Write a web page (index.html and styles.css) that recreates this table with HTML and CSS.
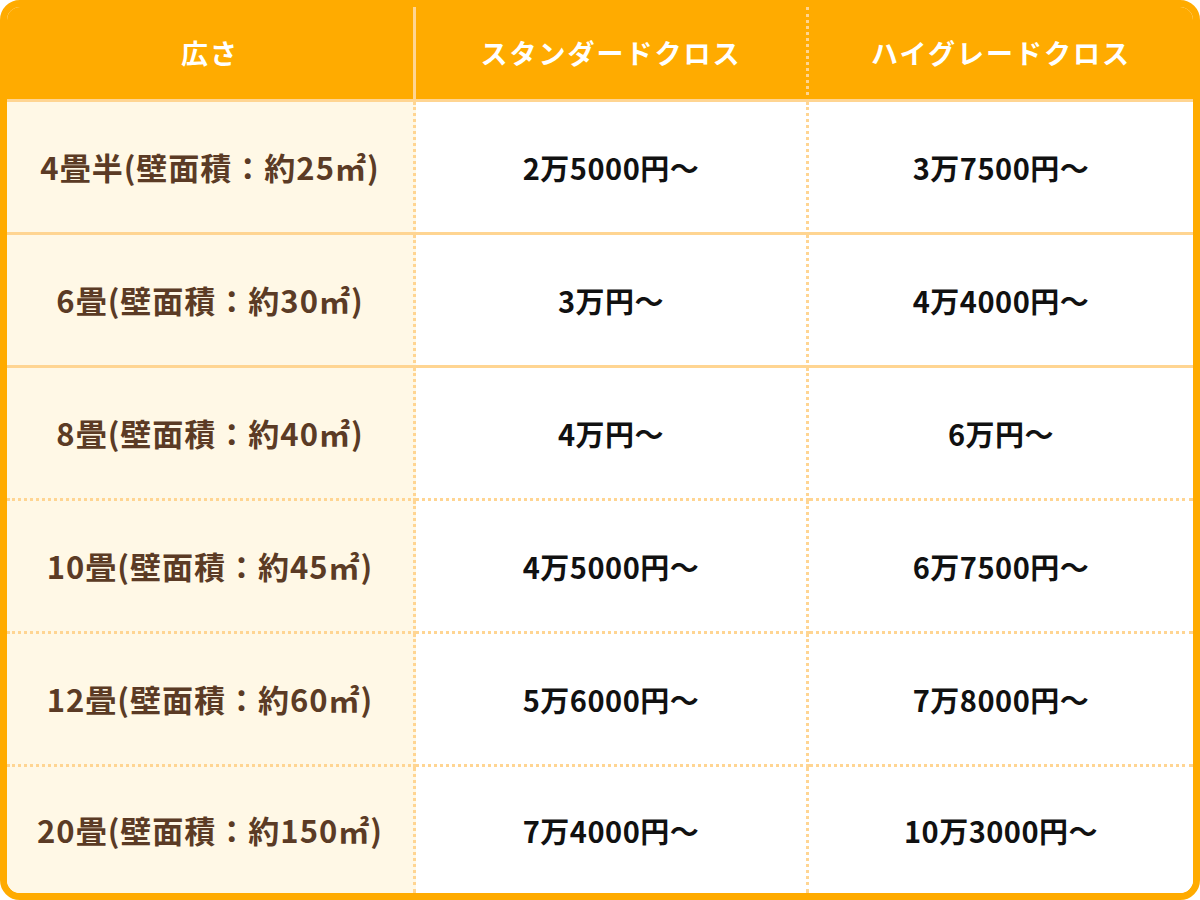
FILE: index.html
```html
<!DOCTYPE html>
<html lang="ja">
<head>
<meta charset="utf-8">
<title>料金表</title>
<link rel="stylesheet" href="styles.css">
</head>
<body>
<div class="wrap">
  <table class="price">
    <thead>
      <tr class="head">
        <th class="c1">広さ</th>
        <th class="c2">スタンダードクロス</th>
        <th class="c3">ハイグレードクロス</th>
      </tr>
    </thead>
    <tbody>
      <tr class="solid">
        <th class="c1">4畳半(壁面積：約25㎡)</th>
        <td class="c2">2万5000円〜</td>
        <td class="c3">3万7500円〜</td>
      </tr>
      <tr class="solid">
        <th class="c1">6畳(壁面積：約30㎡)</th>
        <td class="c2">3万円〜</td>
        <td class="c3">4万4000円〜</td>
      </tr>
      <tr class="dot">
        <th class="c1">8畳(壁面積：約40㎡)</th>
        <td class="c2">4万円〜</td>
        <td class="c3">6万円〜</td>
      </tr>
      <tr class="dot">
        <th class="c1">10畳(壁面積：約45㎡)</th>
        <td class="c2">4万5000円〜</td>
        <td class="c3">6万7500円〜</td>
      </tr>
      <tr class="dot">
        <th class="c1">12畳(壁面積：約60㎡)</th>
        <td class="c2">5万6000円〜</td>
        <td class="c3">7万8000円〜</td>
      </tr>
      <tr class="last">
        <th class="c1">20畳(壁面積：約150㎡)</th>
        <td class="c2">7万4000円〜</td>
        <td class="c3">10万3000円〜</td>
      </tr>
    </tbody>
  </table>
</div>
</body>
</html>
```

FILE: styles.css
```css
html, body {
  margin: 0;
  padding: 0;
  background: #ffffff;
}

body {
  font-family: "Noto Sans CJK JP", "Noto Sans", sans-serif;
}

.wrap {
  width: 1200px;
  height: 900px;
  box-sizing: border-box;
  border: 7px solid #ffab00;
  border-radius: 20px;
  overflow: hidden;
  background: #ffffff;
}

.price {
  width: 1186px;
  height: 886px;
  border-collapse: separate;
  border-spacing: 0;
  table-layout: fixed;
}

.price th,
.price td {
  padding: 0;
  text-align: center;
  vertical-align: middle;
  font-weight: 700;
  line-height: 1.2;
}

.c1 { width: 406px; }
.c2 { width: 390px; }
.c3 { width: 384px; }

/* header */
.head th {
  height: 92px;
  background: #ffab00;
  color: #ffffff;
  font-size: 27px;
  letter-spacing: 2px;
  border-bottom: 3px solid #ffd592;
}
.head .c1 { border-right: 3px solid #ffd592; }
.head .c2 { border-right: 3px dotted #ffd592; }

/* body rows */
tbody th,
tbody td {
  height: 130px;
}
tbody .c1 {
  background: #fff8e6;
  color: #5b3b25;
  font-size: 31px;
  letter-spacing: 1px;
  border-right: 3px dotted #ffd592;
}
tbody .c2,
tbody .c3 {
  background: #ffffff;
  color: #111111;
  font-size: 29px;
  letter-spacing: 0.5px;
}
tbody .c2 { border-right: 3px dotted #ffd592; }

.solid th,
.solid td { border-bottom: 3px solid #ffd592; }

.dot th,
.dot td { border-bottom: 3px dotted #ffd592; }

.last th,
.last td { height: 126px; }
```
